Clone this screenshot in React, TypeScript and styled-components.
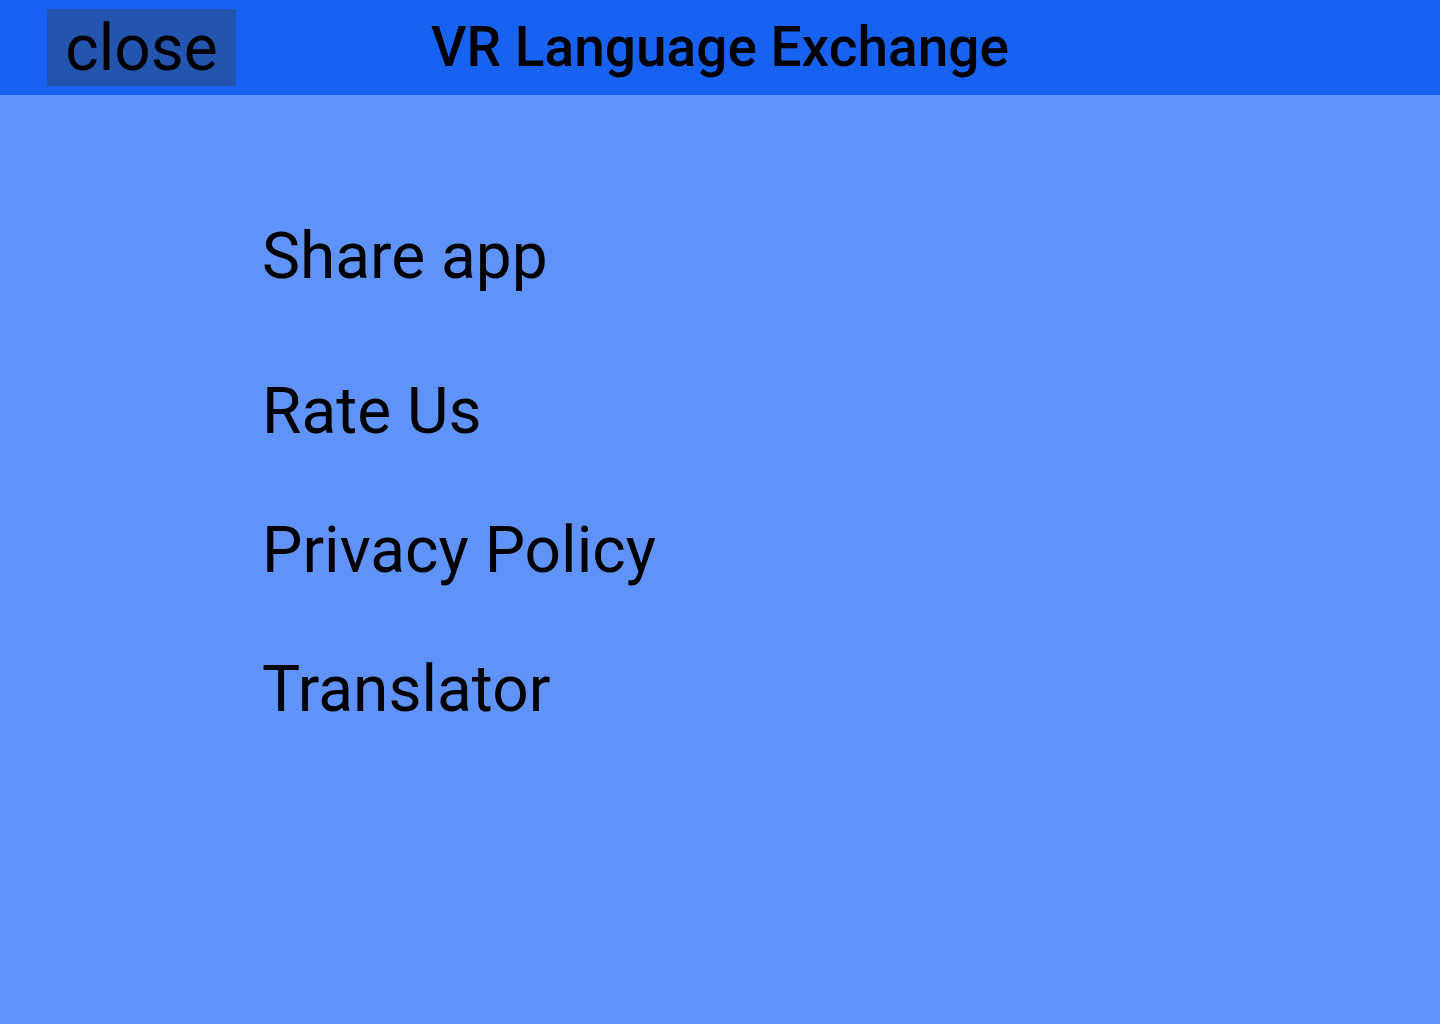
import React from "react";
import styled, { createGlobalStyle } from "styled-components";

const GlobalStyle = createGlobalStyle`
  html, body {
    margin: 0;
    padding: 0;
    background: #6093f8;
    font-family: Roboto, "Liberation Sans", sans-serif;
  }
`;

const Page = styled.div`
  min-height: 1024px;
  background: #6093f8;
  color: #000;
`;

const Header = styled.header`
  display: grid;
  grid-template-columns: 1fr auto 1fr;
  align-items: center;
  height: 95px;
  padding: 0 47px;
  background: #1862f2;
`;

const CloseButton = styled.button`
  justify-self: start;
  display: flex;
  align-items: center;
  justify-content: center;
  width: 189px;
  height: 77px;
  padding: 2px 0 0;
  border: 0;
  background: #2354ae;
  color: #000;
  font-family: Roboto, "Liberation Sans", sans-serif;
  font-size: 64px;
  line-height: 1;
  cursor: pointer;
`;

const Title = styled.h1`
  margin: 0;
  font-size: 55px;
  font-weight: 500;
  line-height: 1;
`;

const Menu = styled.nav`
  display: flex;
  flex-direction: column;
  padding: 122px 0 0 262px;
`;

const MenuItem = styled.a<{ $gap: number }>`
  display: block;
  margin-bottom: ${(p) => p.$gap}px;
  font-size: 64px;
  line-height: 80px;
  color: #000;
  text-decoration: none;
  cursor: pointer;
`;

const items = [
  { label: "Share app", gap: 75 },
  { label: "Rate Us", gap: 59 },
  { label: "Privacy Policy", gap: 59 },
  { label: "Translator", gap: 0 },
];

export default function App() {
  return (
    <Page>
      <GlobalStyle />
      <Header>
        <CloseButton>close</CloseButton>
        <Title>VR Language Exchange</Title>
        <div />
      </Header>
      <Menu>
        {items.map((it) => (
          <MenuItem key={it.label} $gap={it.gap}>
            {it.label}
          </MenuItem>
        ))}
      </Menu>
    </Page>
  );
}
